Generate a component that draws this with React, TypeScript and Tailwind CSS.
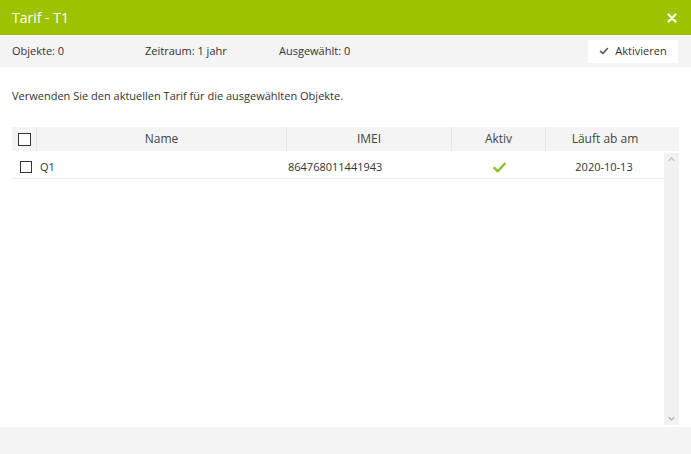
import React from "react";

function Check({ className }: { className?: string }) {
  return (
    <svg viewBox="0 0 16 16" className={className} fill="none" stroke="currentColor" strokeWidth={2.6} strokeLinecap="round" strokeLinejoin="round">
      <path d="M2.5 8.5 L6.2 12 L13.5 4" />
    </svg>
  );
}

export default function App() {
  return (
    <div className="h-screen w-full flex flex-col bg-white text-[11px] text-[#333]" style={{ fontFamily: '"Open Sans", sans-serif' }}>
      <header className="h-[35px] bg-[#9dc300] flex items-center justify-between pl-3 pr-[14px] shrink-0">
        <span className="text-white text-[14px]">Tarif - T1</span>
        <svg viewBox="0 0 10 10" className="w-[10px] h-[10px] text-white" stroke="currentColor" strokeWidth={2.2} strokeLinecap="round">
          <path d="M1.5 1.5 L8.5 8.5 M8.5 1.5 L1.5 8.5" />
        </svg>
      </header>

      <div className="h-[32px] bg-[#f4f4f4] flex items-center pl-3 pr-[13px] shrink-0">
        <span className="w-[133px]">Objekte: 0</span>
        <span className="w-[134px]">Zeitraum: 1 jahr</span>
        <span>Ausgewählt: 0</span>
        <button className="ml-auto h-[23px] w-[90px] bg-white flex items-center justify-center gap-[6px] text-[#333]">
          <Check className="w-[10px] h-[10px] text-[#555]" />
          <span>Aktivieren</span>
        </button>
      </div>

      <div className="flex-1 flex flex-col px-3 min-h-0">
        <p className="pt-[21px] h-[60px]">Verwenden Sie den aktuellen Tarif für die ausgewählten Objekte.</p>

        <div className="flex h-[24px] bg-[#f4f4f4] items-center text-[12px] text-[#444]">
          <div className="w-[25px] h-full flex items-center justify-center border-r border-[#e6e6e6]">
            <span className="w-[13px] h-[13px] border border-[#333] bg-white" />
          </div>
          <div className="w-[250px] h-full flex items-center justify-center border-r border-[#e6e6e6]">Name</div>
          <div className="w-[165px] h-full flex items-center justify-center border-r border-[#e6e6e6]">IMEI</div>
          <div className="w-[94px] h-full flex items-center justify-center border-r border-[#e6e6e6]">Aktiv</div>
          <div className="flex-1 h-full flex items-center justify-center pr-[15px]">Läuft ab am</div>
        </div>

        <div className="flex-1 flex min-h-0 pt-[2px]">
          <div className="flex-1 pt-[1px]">
            <div className="flex h-[25px] items-center border-b border-[#eeeeee] pt-[2px]">
              <div className="w-[25px] flex items-center justify-center pl-[2px]">
                <span className="w-[12px] h-[12px] border border-[#333]" />
              </div>
              <div className="w-[250px] pl-[3px]">Q1</div>
              <div className="w-[165px] pl-[1px]">864768011441943</div>
              <div className="w-[94px] flex justify-center">
                <Check className="w-[15px] h-[15px] text-[#8cc21c]" />
              </div>
              <div className="flex-1 text-center pr-[2px]">2020-10-13</div>
            </div>
          </div>
          <div className="w-[15px] mb-[2px] bg-[#f1f1f1] flex flex-col justify-between items-center py-[4px]">
            <svg viewBox="0 0 10 6" className="w-[7px] h-[5px] text-[#bbb]" fill="none" stroke="currentColor" strokeWidth={1.6}>
              <path d="M1 5 L5 1 L9 5" />
            </svg>
            <svg viewBox="0 0 10 6" className="w-[7px] h-[5px] text-[#aaa]" fill="none" stroke="currentColor" strokeWidth={1.6}>
              <path d="M1 1 L5 5 L9 1" />
            </svg>
          </div>
        </div>
      </div>

      <footer className="h-[27px] bg-[#f4f4f4] shrink-0" />
    </div>
  );
}
